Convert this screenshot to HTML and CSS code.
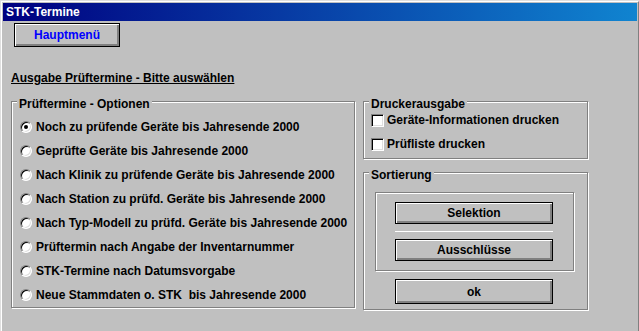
FILE: index.html
```html
<!DOCTYPE html>
<html lang="de">
<head>
<meta charset="utf-8">
<title>STK-Termine</title>
<link rel="stylesheet" href="styles.css">
</head>
<body>
<div class="window">
  <div class="frame">
    <div class="titlebar">STK-Termine</div>
    <div class="client">
      <button class="btn btn-main">Hauptmenü</button>
      <div class="heading">Ausgabe Prüftermine - Bitte auswählen</div>
      <div class="main">
        <div class="group group-options">
          <span class="legend">Prüftermine - Optionen</span>
          <div class="opt"><span class="radio checked"></span><span>Noch zu prüfende Geräte bis Jahresende 2000</span></div>
          <div class="opt"><span class="radio"></span><span>Geprüfte Geräte bis Jahresende 2000</span></div>
          <div class="opt"><span class="radio"></span><span>Nach Klinik zu prüfende Geräte bis Jahresende 2000</span></div>
          <div class="opt"><span class="radio"></span><span>Nach Station zu prüfd. Geräte bis Jahresende 2000</span></div>
          <div class="opt"><span class="radio"></span><span>Nach Typ-Modell zu prüfd. Geräte bis Jahresende 2000</span></div>
          <div class="opt"><span class="radio"></span><span>Prüftermin nach Angabe der Inventarnummer</span></div>
          <div class="opt"><span class="radio"></span><span>STK-Termine nach Datumsvorgabe</span></div>
          <div class="opt"><span class="radio"></span><span>Neue Stammdaten o. STK&nbsp; bis Jahresende 2000</span></div>
        </div>
        <div class="side">
          <div class="group group-print">
            <span class="legend">Druckerausgabe</span>
            <div class="chk-row"><span class="check"></span><span>Geräte-Informationen drucken</span></div>
            <div class="chk-row"><span class="check"></span><span>Prüfliste drucken</span></div>
          </div>
          <div class="group group-sort">
            <span class="legend">Sortierung</span>
            <div class="etched">
              <button class="btn btn-wide">Selektion</button>
              <div class="sep"></div>
              <button class="btn btn-wide">Ausschlüsse</button>
            </div>
            <button class="btn btn-wide btn-ok">ok</button>
          </div>
        </div>
      </div>
    </div>
  </div>
</div>
</body>
</html>
```

FILE: styles.css
```css
html, body {
  margin: 0;
  padding: 0;
  overflow: hidden;
  background: #c0c0c0;
}

body {
  font-family: "Liberation Sans", Arial, sans-serif;
  font-size: 12px;
  font-weight: bold;
  color: #000;
}

.window {
  width: 640px;
  height: 345px;
  box-sizing: border-box;
  border: 1px solid;
  border-color: #dfdfdf #000 #000 #dfdfdf;
  background: #c0c0c0;
}

.frame {
  height: 100%;
  box-sizing: border-box;
  border: 1px solid;
  border-color: #fff #808080 #808080 #fff;
  padding: 1px;
}

.titlebar {
  height: 18px;
  line-height: 18px;
  padding-left: 3px;
  color: #fff;
  background: linear-gradient(to right, #000080, #1084d0);
}

.client {
  padding-left: 8px;
}

.btn {
  display: block;
  box-sizing: border-box;
  margin: 0;
  padding: 0;
  font: inherit;
  color: #000;
  background: #c0c0c0;
  border: 1px solid #000;
  box-shadow: inset 1px 1px 0 #fff, inset -1px -1px 0 #808080, inset -2px -2px 0 #808080;
  text-align: center;
}

.btn-main {
  margin: 2px 0 0 3px;
  width: 106px;
  height: 24px;
  color: #0000ff;
}

.heading {
  margin-top: 24px;
  line-height: 14px;
  text-decoration: underline;
}

.main {
  display: flex;
  align-items: flex-start;
  gap: 8px;
  margin-top: 16px;
}

.group {
  position: relative;
  box-sizing: border-box;
  border: 1px solid #808080;
  box-shadow: inset 1px 1px 0 #fff, 1px 1px 0 #fff;
}

.legend {
  position: absolute;
  top: -5px;
  left: 5px;
  padding: 0 2px;
  line-height: 14px;
  background: #c0c0c0;
}

.group-options {
  width: 344px;
  height: 207px;
  padding: 13px 0 0 8px;
}

.opt {
  display: flex;
  align-items: center;
  height: 24px;
  gap: 4px;
  white-space: pre;
}

.radio {
  position: relative;
  flex: none;
  width: 12px;
  height: 12px;
  box-sizing: border-box;
  border-radius: 50%;
  background: #fff;
  border: 1px solid;
  border-color: #808080 #fff #fff #808080;
  box-shadow: inset 1px 1px 0 #000, inset -1px -1px 0 #dfdfdf;
}

.radio.checked::after {
  content: "";
  position: absolute;
  left: 3px;
  top: 3px;
  width: 4px;
  height: 4px;
  border-radius: 50%;
  background: #000;
}

.side {
  display: flex;
  flex-direction: column;
  width: 225px;
}

.group-print {
  height: 58px;
  padding: 6px 0 0 7px;
}

.chk-row {
  display: flex;
  align-items: center;
  height: 24px;
  gap: 3px;
}

.check {
  flex: none;
  width: 13px;
  height: 13px;
  box-sizing: border-box;
  background: #fff;
  border: 1px solid;
  border-color: #808080 #fff #fff #808080;
  box-shadow: inset 1px 1px 0 #000, inset -1px -1px 0 #dfdfdf;
}

.group-sort {
  margin-top: 13px;
  height: 138px;
  padding: 19px 0 0 11px;
}

.etched {
  box-sizing: border-box;
  width: 199px;
  height: 79px;
  padding: 9px 0 0 19px;
  border: 1px solid #808080;
  box-shadow: inset 1px 1px 0 #fff, 1px 1px 0 #fff;
}

.btn-wide {
  width: 158px;
  height: 22px;
}

.sep {
  width: 158px;
  height: 1px;
  margin: 7px 0;
  background: #fff;
}

.btn-ok {
  margin: 8px 0 0 20px;
  height: 25px;
}
```
